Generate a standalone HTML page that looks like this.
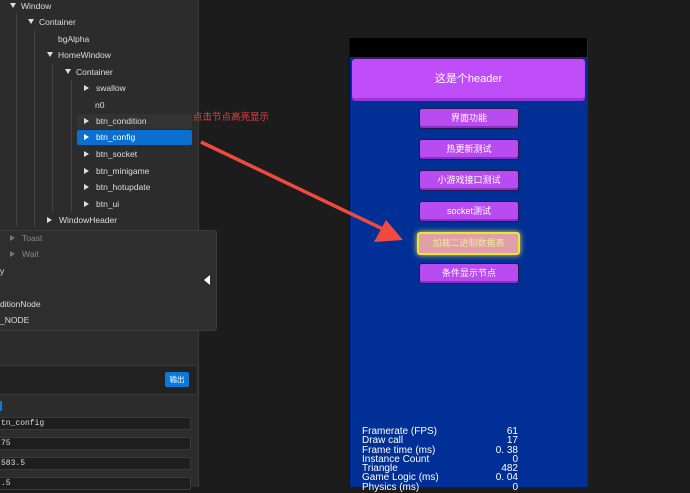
<!DOCTYPE html>
<html><head><meta charset="utf-8"><style>
*{margin:0;padding:0;box-sizing:border-box}
body{width:690px;height:487px;overflow:hidden;background:#1c1c1c;font-family:"Liberation Sans","Noto Sans CJK SC",sans-serif;position:relative}
.lp{position:absolute;left:0;top:0;width:199px;height:487px;background:#2c2c2c;border-right:1px solid #3a3a3a}
.t{position:absolute;color:#ddd;font-size:8.5px;white-space:nowrap}
.tri{display:inline-block;width:0;height:0;border-left:3px solid transparent;border-right:3px solid transparent;border-top:5px solid #ddd;margin-right:5px;vertical-align:1px}
.tr{display:inline-block;width:0;height:0;border-top:3px solid transparent;border-bottom:3px solid transparent;border-left:5px solid #ddd;margin-right:7px;vertical-align:0px}
.vl{position:absolute;width:1px;background:#444}
.ov{position:absolute;left:0;top:230px;width:217px;height:101px;background:#2e2e2e;border:1px solid #3c3c3c;border-left:none;border-radius:0 3px 3px 0}
.inp{position:absolute;left:0;width:191px;height:13px;background:#1e1e1e;border:1px solid #3a3a3a;border-left:none;border-radius:0 2px 2px 0;color:#ddd;font:8px "Liberation Mono",monospace;padding-left:1px;line-height:11px}
.gv{position:absolute;left:349px;top:38px;width:239px;height:449px;background:#003095;border-left:1px solid #111;border-right:1px solid #501040}
.btn{position:absolute;left:69px;width:100px;height:21px;background:#b84cf0;border:1.5px solid #25184a;border-radius:3px;color:#fff;font-size:9px;text-align:center;line-height:18px;box-shadow:inset 0 -2px 0 #8a30c8}
.st{position:absolute;left:12px;color:#fff;font-size:10px;line-height:9.3px;width:156px}
.st div{display:flex;justify-content:space-between}
</style></head><body>
<div class="lp"></div>
<div class="vl" style="left:16px;top:14px;height:212px"></div>
<div class="vl" style="left:34px;top:30px;height:196px"></div>
<div class="vl" style="left:52px;top:64px;height:148px"></div>
<div class="vl" style="left:71px;top:80px;height:132px"></div>
<div class="t" style="left:10px;top:1px"><span class="tri"></span>Window</div>
<div class="t" style="left:28px;top:17px"><span class="tri"></span>Container</div>
<div class="t" style="left:58px;top:34px">bgAlpha</div>
<div class="t" style="left:47px;top:50px"><span class="tri"></span>HomeWindow</div>
<div class="t" style="left:65px;top:67px"><span class="tri"></span>Container</div>
<div class="t" style="left:84px;top:83px"><span class="tr"></span>swallow</div>
<div class="t" style="left:95px;top:100px">n0</div>
<div style="position:absolute;left:77px;top:114px;width:115px;height:15px;background:#333"></div>
<div class="t" style="left:84px;top:116px"><span class="tr"></span>btn_condition</div>
<div style="position:absolute;left:77px;top:130px;width:115px;height:15px;background:#0a6fcf;border-radius:2px"></div>
<div class="t" style="left:84px;top:132px;color:#fff"><span class="tr" style="border-left-color:#fff"></span>btn_config</div>
<div class="t" style="left:84px;top:149px"><span class="tr"></span>btn_socket</div>
<div class="t" style="left:84px;top:166px"><span class="tr"></span>btn_minigame</div>
<div class="t" style="left:84px;top:182px"><span class="tr"></span>btn_hotupdate</div>
<div class="t" style="left:84px;top:199px"><span class="tr"></span>btn_ui</div>
<div class="t" style="left:47px;top:215px"><span class="tr"></span>WindowHeader</div>
<div class="ov"></div>
<div class="t" style="left:10px;top:233px;color:#888"><span class="tr" style="border-left-color:#777"></span>Toast</div>
<div class="t" style="left:10px;top:249px;color:#888"><span class="tr" style="border-left-color:#777"></span>Wait</div>
<div class="t" style="left:0;top:266px">y</div>
<div class="t" style="left:0;top:299px">ditionNode</div>
<div class="t" style="left:0;top:315px">_NODE</div>
<div style="position:absolute;left:204px;top:275px;width:0;height:0;border-top:5px solid transparent;border-bottom:5px solid transparent;border-right:6px solid #fff"></div>
<div style="position:absolute;left:0;top:365px;width:196px;height:30px;background:#222;border-top:1px solid #3a3a3a;border-bottom:1px solid #3a3a3a"></div>
<div style="position:absolute;left:165px;top:372px;width:24px;height:15px;background:#0a78d8;border-radius:2px;color:#fff;font-size:7.5px;text-align:center;line-height:15px">输出</div>
<div style="position:absolute;left:0;top:401px;width:2px;height:10px;background:#0a78d8"></div>
<div class="inp" style="top:417px">tn_config</div>
<div class="inp" style="top:437px">75</div>
<div class="inp" style="top:457px">583.5</div>
<div class="inp" style="top:477px">.5</div>
<div class="gv">
<div style="position:absolute;left:0;top:0;width:237px;height:19px;background:#000"></div>
<div style="position:absolute;left:1px;top:20px;width:235px;height:44px;background:#c04ef8;border:1.5px solid #3a1a60;border-radius:4px;color:#fff;font-size:11px;text-align:center;line-height:40px;box-shadow:inset 0 -3px 0 #9a36d8">这是个header</div>
<div class="btn" style="top:70px">界面功能</div>
<div class="btn" style="top:101px">热更新测试</div>
<div class="btn" style="top:132px">小游戏接口测试</div>
<div class="btn" style="top:163px">socket测试</div>
<div class="btn" style="top:194px;left:67px;width:103px;height:23px;background:#e0a0a8;border:2px solid #f0e040;color:#f0e8a0;box-shadow:0 0 6px #f0e040;line-height:18px">加载二进制数据表</div>
<div class="btn" style="top:225px">条件显示节点</div>
<div class="st" style="top:389px">
<div><span>Framerate (FPS)</span><span>61</span></div>
<div><span>Draw call</span><span>17</span></div>
<div><span>Frame time (ms)</span><span>0. 38</span></div>
<div><span>Instance Count</span><span>0</span></div>
<div><span>Triangle</span><span>482</span></div>
<div><span>Game Logic (ms)</span><span>0. 04</span></div>
<div><span>Physics (ms)</span><span>0</span></div>
</div>
</div>
<div class="t" style="left:193px;top:109px;color:#f04040;font-size:9.5px">点击节点高亮显示</div>
<svg style="position:absolute;left:0;top:0" width="690" height="487"><line x1="201" y1="142" x2="385" y2="230" stroke="#f04a40" stroke-width="3.5"/><polygon points="403,240 374,242 386,220" fill="#f04a40"/></svg>
</body></html>
